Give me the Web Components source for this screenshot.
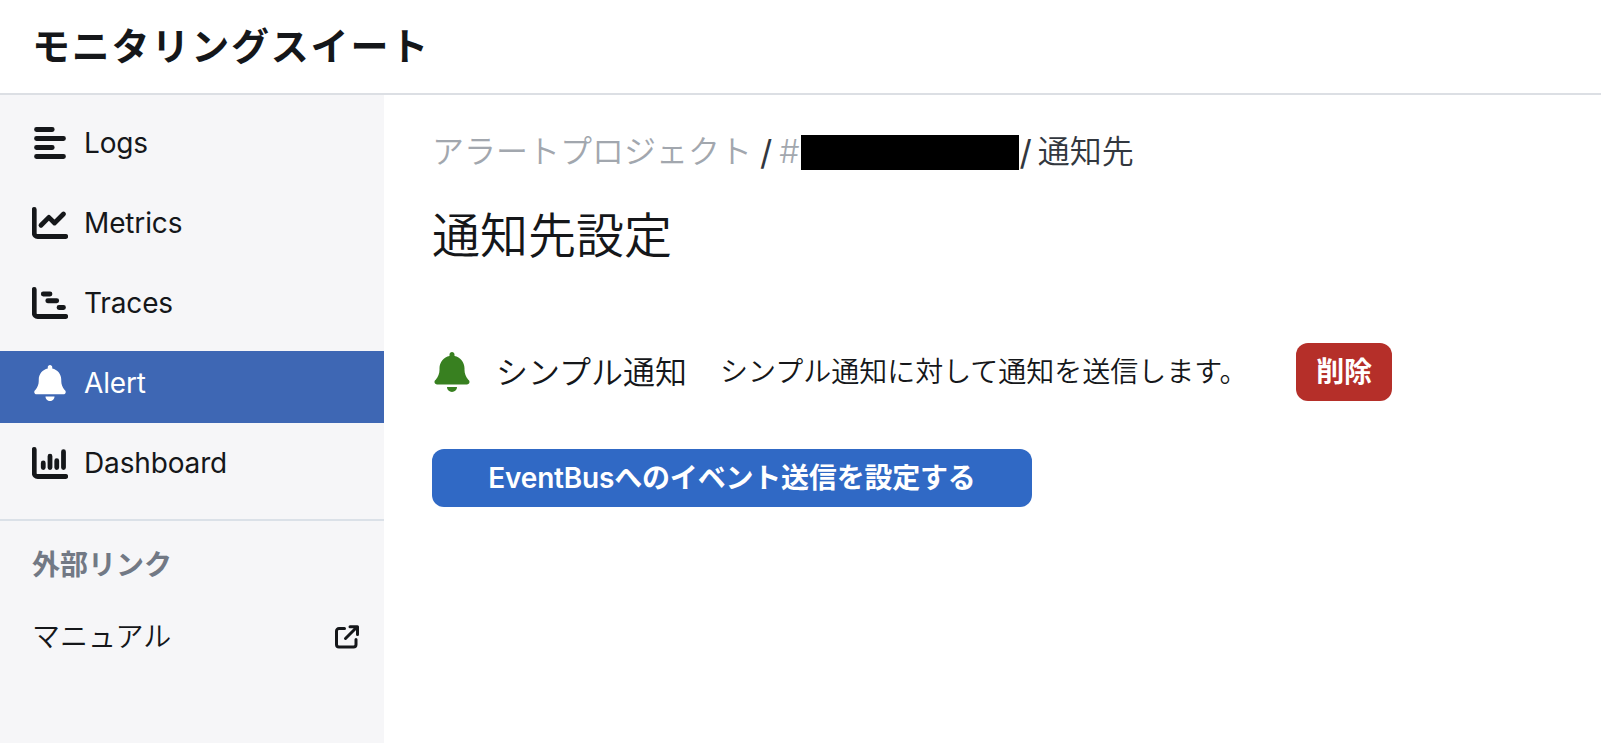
<!DOCTYPE html>
<html lang="ja">
<head>
<meta charset="utf-8">
<title>モニタリングスイート</title>
<style>
  body {
    margin: 0;
    font-family: Inter, "Noto Sans CJK JP", sans-serif;
    font-size: 28px;
    font-weight: 400;
    color: #15171a;
    background: #fff;
  }
</style>
</head>
<body>
<monitor-app>
  <app-header slot="header">モニタリングスイート</app-header>
  <side-bar slot="side">
    <nav-item icon="logs">Logs</nav-item>
    <nav-item icon="metrics">Metrics</nav-item>
    <nav-item icon="traces">Traces</nav-item>
    <nav-item icon="bell" active>Alert</nav-item>
    <nav-item icon="dashboard">Dashboard</nav-item>
    <link-group slot="links" heading="外部リンク">マニュアル</link-group>
  </side-bar>
  <bread-crumb></bread-crumb>
  <page-title>通知先設定</page-title>
  <notify-row name="シンプル通知">
    シンプル通知に対して通知を送信します。
    <app-button slot="action" kind="danger">削除</app-button>
  </notify-row>
  <app-button kind="primary">EventBusへのイベント送信を設定する</app-button>
</monitor-app>

<script>
// small helper: open shadow root filled from a template
function attach(el, html) {
  const template = document.createElement("template");
  template.innerHTML = html;
  el.attachShadow({ mode: "open" }).appendChild(template.content.cloneNode(true));
}

const AXES = `<path d="M32 64V400a48 48 0 0 0 48 48H480"/>`;

// line icons are drawn with 64 unit strokes, bell is a filled shape
const ICONS = {
  logs: `<g class="line"><path d="M64 64H288M64 192H448M64 320H288M64 448H448"/></g>`,
  metrics: `<g class="line">${AXES}<path d="M128 288L240 176L320 256L448 128"/></g>`,
  traces: `<g class="line">${AXES}<path d="M160 128H256M224 224H352M384 320H448"/></g>`,
  dashboard: `<g class="line">${AXES}<path d="M160 256V320M256 160V320M352 224V320M448 96V320"/></g>`,
  bell: `<path transform="translate(32 0)" fill="currentColor" d="M224 0c-17.7 0-32 14.3-32 32V51.2C119 66 64 130.6 64 208v18.8c0 47-17.3 92.4-48.5 127.6l-7.4 8.3c-8.4 9.4-10.4 22.9-5.3 34.4S19.4 416 32 416H416c12.6 0 24-7.4 29.2-18.9s3.1-25-5.3-34.4l-7.4-8.3C401.3 319.2 384 273.9 384 226.8V208c0-77.4-55-142-128-156.8V32c0-17.7-14.3-32-32-32zm45.3 493.3c12-12 18.7-28.3 18.7-45.3H160c0 17 6.7 33.3 18.7 45.3s28.3 18.7 45.3 18.7s33.3-6.7 45.3-18.7z"/>`
};

class AppIcon extends HTMLElement {
  connectedCallback() {
    attach(this, `
<style>
  :host { display: block; width: 36px; height: 36px; flex: none; }
  svg { display: block; width: 100%; height: 100%; }
  .line { fill: none; stroke: currentColor; stroke-width: 68; stroke-linecap: round; stroke-linejoin: round; }
</style>
<svg viewBox="0 0 512 512">${ICONS[this.getAttribute("name")]}</svg>`);
  }
}
customElements.define("app-icon", AppIcon);

class MonitorApp extends HTMLElement {
  constructor() {
    super();
    attach(this, `
<style>
  :host { display: grid; grid-template: 95px 1fr / 384px 1fr; height: 100vh; overflow: hidden; }
  main { padding: 33px 48px; display: flex; flex-direction: column; align-items: flex-start; }
</style>
<slot name="header"></slot>
<slot name="side"></slot>
<main><slot></slot></main>`);
  }
}
customElements.define("monitor-app", MonitorApp);

class AppHeader extends HTMLElement {
  constructor() {
    super();
    attach(this, `
<style>
  :host {
    grid-column: 1 / 3;
    display: flex;
    align-items: center;
    box-sizing: border-box;
    padding: 0 32px 2px;
    border-bottom: 2px solid #dcdfe4;
    background: #fff;
  }
  h1 { margin: 0; font-size: 38px; font-weight: 700; line-height: 60px; letter-spacing: 1.8px; }
</style>
<h1><slot></slot></h1>`);
  }
}
customElements.define("app-header", AppHeader);

class SideBar extends HTMLElement {
  constructor() {
    super();
    attach(this, `
<style>
  :host { display: block; background: #f6f6f8; }
  nav { display: flex; flex-direction: column; gap: 8px; padding: 16px 0; }
  .links { border-top: 2px solid #dbe1e8; }
</style>
<nav><slot></slot></nav>
<div class="links"><slot name="links"></slot></div>`);
  }
}
customElements.define("side-bar", SideBar);

class NavItem extends HTMLElement {
  connectedCallback() {
    attach(this, `
<style>
  :host { display: flex; gap: 16px; box-sizing: border-box; height: 72px; padding: 14px 32px 22px; line-height: 36px; letter-spacing: -0.15px; }
  :host([active]) { background: #3e67b4; color: #fff; }
</style>
<app-icon name="${this.getAttribute("icon")}"></app-icon>
<span><slot></slot></span>`);
  }
}
customElements.define("nav-item", NavItem);

class LinkGroup extends HTMLElement {
  connectedCallback() {
    attach(this, `
<style>
  :host { display: block; padding: 23px 24px 0 32px; }
  h2 { margin: 0 0 31px; font-size: 28px; font-weight: 600; line-height: 42px; color: #727985; }
  a { display: flex; justify-content: space-between; align-items: center; line-height: 40px; font-weight: 350; }
  svg { display: block; width: 26px; height: 26px; }
</style>
<h2>${this.getAttribute("heading")}</h2>
<a><slot></slot>
  <svg viewBox="0 0 26 26" fill="none" stroke="currentColor" stroke-width="3" stroke-linecap="round" stroke-linejoin="round">
    <path d="M10.500 4.500H5a2.500 2.500 0 0 0-2.500 2.500V20.500a2.500 2.500 0 0 0 2.500 2.500H19.500a2.500 2.500 0 0 0 2.500-2.500V15.500M11.500 14.500L22 4M16 2.800H23.500V10.500"/>
  </svg>
</a>`);
  }
}
customElements.define("link-group", LinkGroup);

class BreadCrumb extends HTMLElement {
  constructor() {
    super();
    attach(this, `
<style>
  :host { display: flex; align-items: center; font-size: 32px; font-weight: 350; line-height: 48px; color: #32373e; }
  .up { color: #a2a7ae; }
  .mask { width: 218px; height: 35px; background: #000; margin: 0 1px; }
  .sep { margin: 2px 7px 0 8px; font-size: 34px; font-weight: 400; line-height: 46px; }
  .mask + .sep { margin: 2px 6px 0 0; }
</style>
<span class="up">アラートプロジェクト</span>
<span class="sep">/</span>
<span class="up">#</span>
<span class="mask"></span>
<span class="sep">/</span>
<span>通知先</span>`);
  }
}
customElements.define("bread-crumb", BreadCrumb);

class PageTitle extends HTMLElement {
  constructor() {
    super();
    attach(this, `
<style>
  :host { display: block; margin: 24px 0 71px; }
  h2 { margin: 0; font-size: 48px; font-weight: 350; line-height: 72px; }
</style>
<h2><slot></slot></h2>`);
  }
}
customElements.define("page-title", PageTitle);

class NotifyRow extends HTMLElement {
  connectedCallback() {
    attach(this, `
<style>
  :host { display: flex; align-items: center; height: 58px; margin-bottom: 48px; font-weight: 350; }
  app-icon { width: 40px; height: 40px; color: #388020; }
  span { padding-bottom: 4px; }
  .name { margin-left: 24px; width: 224px; font-size: 32px; }
  .text { width: 576px; }
</style>
<app-icon name="bell"></app-icon>
<span class="name">${this.getAttribute("name")}</span>
<span class="text"><slot></slot></span>
<slot name="action"></slot>`);
  }
}
customElements.define("notify-row", NotifyRow);

class AppButton extends HTMLElement {
  constructor() {
    super();
    attach(this, `
<style>
  :host { display: block; }
  button {
    display: block;
    height: 58px;
    width: 96px;
    padding: 0 0 4px;
    border: 0;
    border-radius: 12px;
    font: inherit;
    font-size: 28px;
    font-weight: 600;
    letter-spacing: -0.2px;
    color: #fff;
    background: #b52f29;
  }
  :host([kind="primary"]) button { width: 600px; background: #3069c5; }
</style>
<button><slot></slot></button>`);
  }
}
customElements.define("app-button", AppButton);
</script>
</body>
</html>
